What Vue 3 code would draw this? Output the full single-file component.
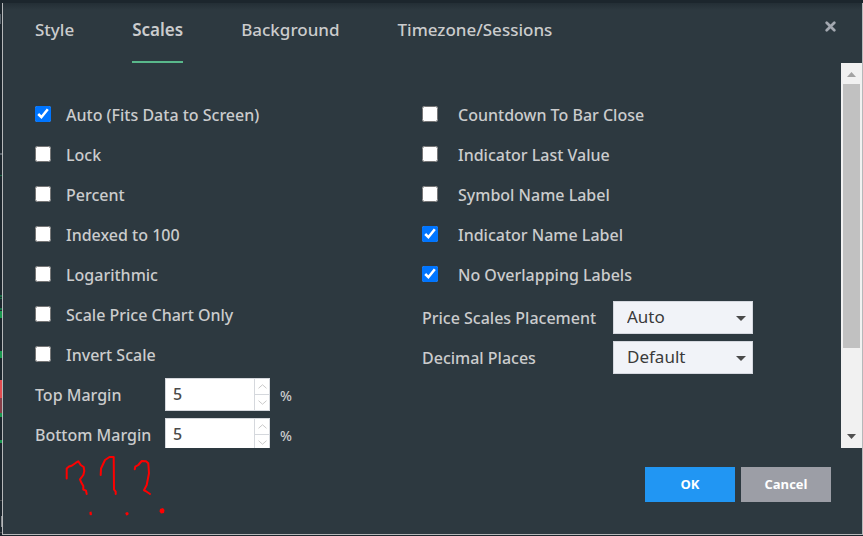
<script setup>
import { ref, reactive } from 'vue'

const tabs = ['Style', 'Scales', 'Background', 'Timezone/Sessions']
const active = ref('Scales')

const leftOptions = reactive([
  { id: 'auto', label: 'Auto (Fits Data to Screen)', on: true },
  { id: 'lock', label: 'Lock', on: false },
  { id: 'percent', label: 'Percent', on: false },
  { id: 'indexed', label: 'Indexed to 100', on: false },
  { id: 'log', label: 'Logarithmic', on: false },
  { id: 'price-only', label: 'Scale Price Chart Only', on: false },
  { id: 'invert', label: 'Invert Scale', on: false }
])
const rightOptions = reactive([
  { id: 'countdown', label: 'Countdown To Bar Close', on: false },
  { id: 'last-value', label: 'Indicator Last Value', on: false },
  { id: 'symbol-name', label: 'Symbol Name Label', on: false },
  { id: 'indicator-name', label: 'Indicator Name Label', on: true },
  { id: 'no-overlap', label: 'No Overlapping Labels', on: true }
])
const margins = reactive([
  { id: 'top-margin', label: 'Top Margin', value: '5' },
  { id: 'bottom-margin', label: 'Bottom Margin', value: '5' }
])
const selects = reactive([
  { id: 'placement', label: 'Price Scales Placement', value: 'Auto', options: ['Auto', 'Left', 'Right'] },
  { id: 'decimals', label: 'Decimal Places', value: 'Default', options: ['Default', '1', '2', '3'] }
])

function step(m, by) {
  m.value = String(Number(m.value) + by)
}
</script>

<template>
  <div class="page">
    <svg class="chart-edge" viewBox="0 0 2 536" aria-hidden="true">
      <path d="M0 14h1v10H0zM0 153h2v2H0z" fill="#59636b" />
      <path d="M0 175h2v1H0zM0 295h2v2H0zM0 298h2v1H0zM0 308h2v2H0z" fill="#176b43" />
      <path d="M0 311h2v7H0zM0 351h2v7H0zM0 413h2v4H0zM0 440h2v3H0z" fill="#18994f" />
      <path d="M0 380h2v18H0z" fill="#e24c50" />
      <path d="M0 398h2v15H0z" fill="#863e48" />
      <path d="M0 500h2v1H0zM0 532h2v1H0z" fill="#4a4d50" />
      <path d="M1 516h1v11H1z" fill="#8c9093" />
    </svg>
    <section class="dialog" role="dialog" aria-label="Scales">
      <header class="head">
        <nav class="tabs">
          <button
            v-for="t in tabs"
            :key="t"
            type="button"
            class="tab"
            :class="{ active: t === active }"
            @click="active = t"
          >{{ t }}</button>
        </nav>
        <button type="button" class="close" aria-label="Close">
          <svg viewBox="0 0 11 11" width="11" height="11">
            <path d="M1.7 1.7 9.3 9.3M9.3 1.7 1.7 9.3" stroke="#a3a8b0" stroke-width="2.7" stroke-linecap="round" />
          </svg>
        </button>
      </header>

      <div class="body">
        <div class="content">
          <div class="column">
            <div v-for="o in leftOptions" :key="o.id" class="row check">
              <input :id="o.id" v-model="o.on" type="checkbox" />
              <label :for="o.id">{{ o.label }}</label>
            </div>
            <div v-for="m in margins" :key="m.id" class="row margin">
              <label :for="m.id">{{ m.label }}</label>
              <div class="number">
                <input :id="m.id" v-model="m.value" type="text" inputmode="numeric" />
                <div class="steps">
                  <button type="button" aria-label="Increase" @click="step(m, 1)">
                    <svg viewBox="0 0 9 5" width="9" height="5"><path d="M.5 4.3 4.5.8l4 3.5" /></svg>
                  </button>
                  <button type="button" aria-label="Decrease" @click="step(m, -1)">
                    <svg viewBox="0 0 9 5" width="9" height="5"><path d="M.5.7l4 3.5 4-3.5" /></svg>
                  </button>
                </div>
              </div>
              <span class="unit">%</span>
            </div>
          </div>
          <div class="column">
            <div v-for="o in rightOptions" :key="o.id" class="row check wide">
              <input :id="o.id" v-model="o.on" type="checkbox" />
              <label :for="o.id">{{ o.label }}</label>
            </div>
            <div class="choices">
              <div v-for="s in selects" :key="s.id" class="row choice">
                <label :for="s.id">{{ s.label }}</label>
                <div class="select">
                  <select :id="s.id" v-model="s.value">
                    <option v-for="v in s.options" :key="v">{{ v }}</option>
                  </select>
                  <svg viewBox="0 0 10 5" width="10" height="5"><path d="M0 0h10L5 5z" fill="#4a4a4a" /></svg>
                </div>
              </div>
            </div>
          </div>
        </div>
        <div class="scrollbar" aria-hidden="true">
          <svg viewBox="0 0 21 21" width="21" height="21"><path d="M6 14h9L10.500 9z" fill="#a3a3a3" /></svg>
          <div class="track"><div class="thumb"></div></div>
          <svg viewBox="0 0 21 21" width="21" height="21"><path d="M6 7h9l-4.500 5z" fill="#505050" /></svg>
        </div>
      </div>

      <footer class="foot">
        <button type="button" class="action ok">OK</button>
        <button type="button" class="action cancel">Cancel</button>
      </footer>
    </section>

    <svg class="scribble" viewBox="0 0 106 64" width="106" height="64" aria-hidden="true">
      <g fill="none" stroke="#f00" stroke-width="2" stroke-linecap="round" stroke-linejoin="round">
        <path d="M6.700 26.500V16.500L9 14.500 11.700 13.700 16 10.700 18.300 9.300 20.700 13 23.700 15 24.300 19 23.300 23 20 27.300 21 30 23.300 34V37.500L26 38.700 26.700 42" />
        <path d="M40.700 23 41 16.500 45 8 49.500 5H53.700L54 37.500 55.700 39.700V42" />
        <path d="M74.700 17.300 75.300 14.700 78.300 13 81.700 9 86 9.300 88.300 11.300 89 21.300 86.700 33 84 38.300 86.700 39.700 90 42" />
      </g>
      <path d="M29.500 60l2-.5.500 3-1 1-1.500-1zM65.200 61l2-1 1.500 1-.5 2-2 .5zM100 57l3-1 1.500 2-.5 3-3 .5-1.500-2z" fill="#f00" />
    </svg>
  </div>
</template>

<style>
body {
  margin: 0;
}
</style>

<style scoped>
.page {
  position: relative;
  box-sizing: border-box;
  height: 100vh;
  min-height: 320px;
  padding: 3px 0 1px 2px;
  background: #1c262d;
  font-family: 'Noto Sans', 'Open Sans', sans-serif;
  font-size: 16px;
  color: #cbcccd;
}
.chart-edge {
  position: absolute;
  left: 0;
  top: 0;
  width: 2px;
  height: 536px;
}
.dialog {
  box-sizing: border-box;
  height: 100%;
  display: flex;
  flex-direction: column;
  border: 1px solid #b6b8ba;
  border-top: 0;
  background: linear-gradient(#232e35, #2d3940 7px);
}
button {
  border: 0;
  padding: 0;
  background: none;
  font: inherit;
  color: inherit;
}
.head {
  display: flex;
  justify-content: space-between;
  flex: none;
  height: 60px;
  padding: 0 26px 0 32px;
}
.tabs {
  display: flex;
  gap: 58px;
}
.tab {
  box-sizing: border-box;
  height: 60px;
  padding-bottom: 6px;
  border-bottom: 2px solid transparent;
  font-size: 17px;
  font-weight: 500;
}
.tab.active {
  border-color: #59b88b;
  font-weight: 600;
}
.close {
  height: 46px;
}
.close svg {
  display: block;
}
.body {
  display: flex;
  flex: 1;
  min-height: 0;
}
.content {
  flex: 1;
  display: grid;
  grid-template-columns: 387fr 419fr;
  padding: 32px 0 0 32px;
  overflow: hidden;
}
.row {
  display: flex;
  align-items: center;
  height: 40px;
  font-weight: 500;
  white-space: nowrap;
}
.check {
  gap: 15px;
}
.wide {
  gap: 20px;
}
.check input {
  width: 16px;
  height: 16px;
  margin: 0 0 2px;
  accent-color: #0075ff;
}
.margin label {
  width: 130px;
}
.number {
  box-sizing: border-box;
  display: flex;
  width: 105px;
  height: 33px;
  margin-bottom: 1px;
  border: 1px solid #d5d8dd;
  background: #fff;
}
.number input {
  flex: 1;
  min-width: 0;
  border: 0;
  padding: 0 7px 2px;
  outline: 0;
  background: none;
  font: inherit;
  color: #4a4a4a;
}
.steps {
  display: flex;
  flex-direction: column;
  width: 14px;
  border-left: 1px solid #d5d8dd;
}
.steps button {
  flex: 1;
  display: flex;
  align-items: center;
  justify-content: center;
}
.steps button + button {
  border-top: 1px solid #d5d8dd;
}
.steps path {
  fill: none;
  stroke: #c9c9c9;
}
.unit {
  padding-left: 10px;
  font-size: 14px;
}
.choices {
  padding-top: 3px;
}
.choice label {
  width: 191px;
}
.select {
  position: relative;
  width: 140px;
  margin-bottom: 1px;
}
.select select {
  display: block;
  box-sizing: border-box;
  width: 100%;
  height: 33px;
  padding: 0 24px 2px 13px;
  border: 1px solid #d5d8df;
  border-radius: 0;
  appearance: none;
  background: #f1f3f8;
  font: inherit;
  font-size: 17px;
  font-weight: 400;
  color: #3a3a3a;
}
.select svg {
  position: absolute;
  right: 7px;
  top: 15px;
  pointer-events: none;
}
.scrollbar {
  flex: none;
  display: flex;
  flex-direction: column;
  width: 21px;
  background: #f1f1f1;
}
.scrollbar svg {
  display: block;
}
.track {
  flex: 1;
  padding: 0 2px;
}
.thumb {
  height: 77%;
  background: #c1c1c1;
}
.foot {
  flex: none;
  display: flex;
  justify-content: flex-end;
  gap: 6px;
  padding: 19px 31px 32px;
}
.action {
  width: 90px;
  height: 35px;
  padding-bottom: 2px;
  font-family: 'Open Sans', sans-serif;
  font-size: 13px;
  font-weight: 700;
  color: #fff;
}
.ok {
  background: #2196f3;
}
.cancel {
  background: #9c9ea6;
}
.scribble {
  position: absolute;
  left: 60px;
  bottom: 20px;
}
</style>
